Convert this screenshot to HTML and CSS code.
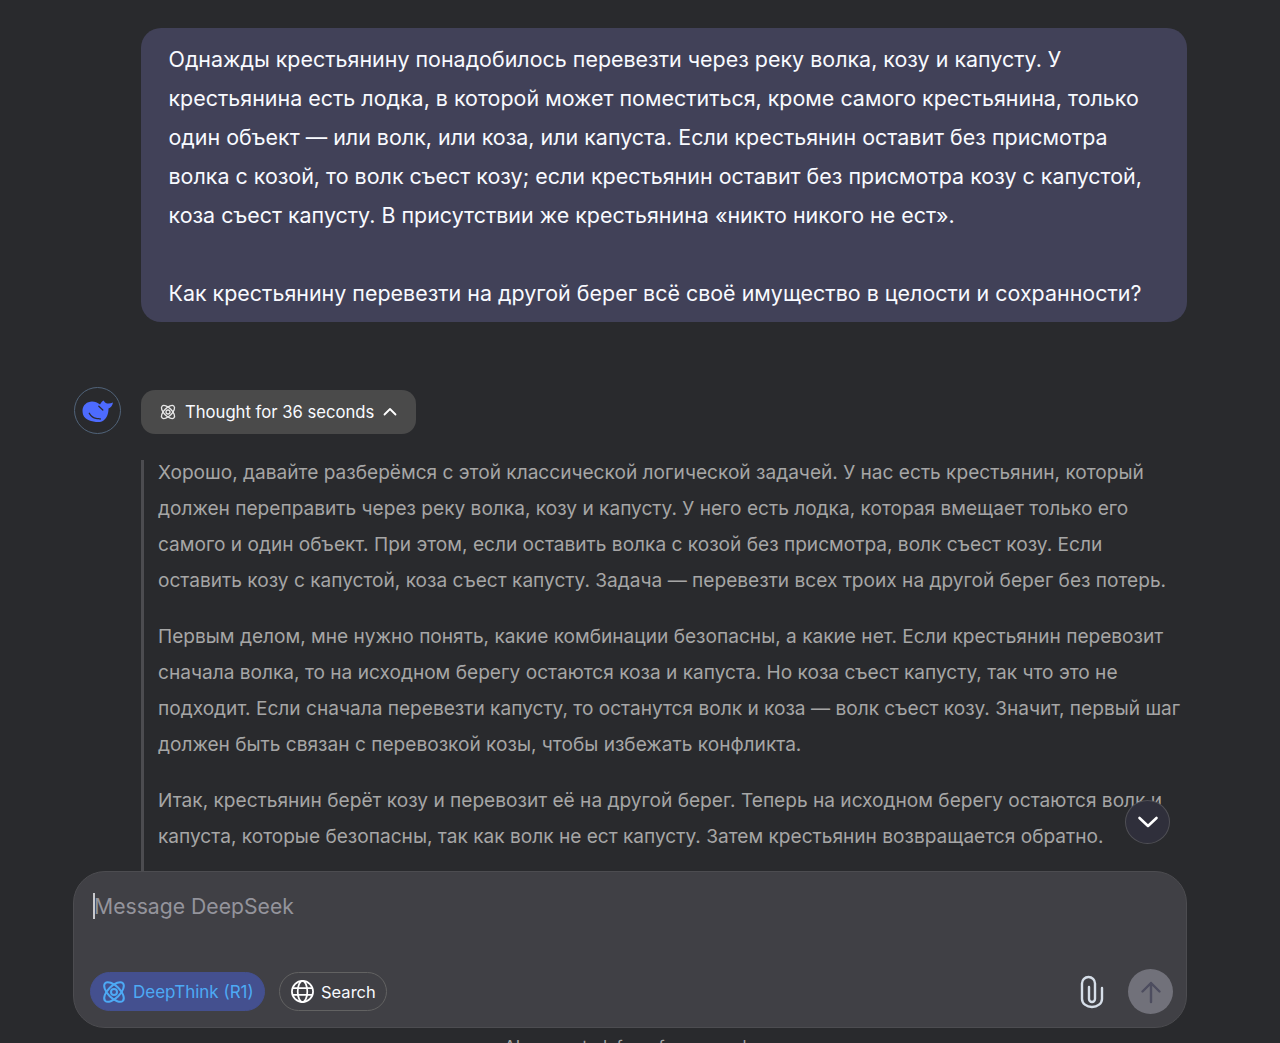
FILE: index.html
```html
<!DOCTYPE html>
<html lang="en">
<head>
    <meta charset="UTF-8">
    <meta name="viewport" content="width=device-width, initial-scale=1.0">
    <title>DeepSeek Chat</title>
    <link rel="stylesheet" href="styles.css">
</head>
<body>

    <main class="thread">
        <div class="user-msg">
            Однажды крестьянину понадобилось перевезти через реку волка, козу и капусту. У<br>
            крестьянина есть лодка, в которой может поместиться, кроме самого крестьянина, только<br>
            один объект — или волк, или коза, или капуста. Если крестьянин оставит без присмотра<br>
            волка с козой, то волк съест козу; если крестьянин оставит без присмотра козу с капустой,<br>
            коза съест капусту. В присутствии же крестьянина «никто никого не ест».<br>
            <br>
            Как крестьянину перевезти на другой берег всё своё имущество в целости и сохранности?
        </div>

        <div class="answer-head">
            <div class="avatar">
                <svg width="31" height="22" viewBox="0 0 31 22">
                    <path fill="#4d6bfe" d="M.5 10C1 5 5 1.500 10 1.500c3 0 5.500 1 8 3 .8-1.500 2-3 3.500-4 1 1.500 2 2.500 3.500 3 2 .3 4 0 6-1-.5 3-2.500 5.500-4.500 6 0 4-1 9-5 12-1.500 1-3.500 1.500-5 1.500-7 0-13.500-2-15.500-7.500C.7 13 .4 11.500 .5 10z"/>
                    <path d="M7.300 13.300C9 16 11.500 18 14 18.300c1.500.2 3 .5 4.300.7M16.800 6.200l4 3.800" fill="none" stroke="#2a2b30" stroke-width="1.300" stroke-linecap="round"/>
                </svg>
            </div>
            <button class="thought-btn">
                <svg class="atom" width="16" height="16" viewBox="0 0 24 24"><use href="#atom-icon"/></svg>
                <span>Thought for 36 seconds</span>
                <svg width="14" height="14" viewBox="0 0 14 14"><path d="M1.500 9.500 7 4l5.500 5.500" fill="none" stroke="#fff" stroke-width="1.800" stroke-linecap="round" stroke-linejoin="round"/></svg>
            </button>
        </div>

        <div class="thinking">
            <p>Хорошо, давайте разберёмся с этой классической логической задачей. У нас есть крестьянин, который<br>
            должен переправить через реку волка, козу и капусту. У него есть лодка, которая вмещает только его<br>
            самого и один объект. При этом, если оставить волка с козой без присмотра, волк съест козу. Если<br>
            оставить козу с капустой, коза съест капусту. Задача — перевезти всех троих на другой берег без потерь.</p>
            <p>Первым делом, мне нужно понять, какие комбинации безопасны, а какие нет. Если крестьянин перевозит<br>
            сначала волка, то на исходном берегу остаются коза и капуста. Но коза съест капусту, так что это не<br>
            подходит. Если сначала перевезти капусту, то останутся волк и коза — волк съест козу. Значит, первый шаг<br>
            должен быть связан с перевозкой козы, чтобы избежать конфликта.</p>
            <p>Итак, крестьянин берёт козу и перевозит её на другой берег. Теперь на исходном берегу остаются волк и<br>
            капуста, которые безопасны, так как волк не ест капусту. Затем крестьянин возвращается обратно.</p>
        </div>
    </main>

    <button class="scroll-btn">
        <svg width="24" height="24" viewBox="0 0 24 24"><path d="M3.500 8 12 16l8.500-8" fill="none" stroke="#fff" stroke-width="2.600" stroke-linecap="round" stroke-linejoin="round"/></svg>
    </button>

    <div class="composer">
        <div class="prompt"><span class="caret"></span>Message DeepSeek</div>
        <div class="tools">
            <button class="pill pill-active">
                <svg width="24" height="24" viewBox="0 0 24 24"><use href="#atom-icon"/></svg>
                <span>DeepThink (R1)</span>
            </button>
            <button class="pill pill-search">
                <svg width="25" height="25" viewBox="0 0 26 26" fill="none" stroke="#fff" stroke-width="1.800">
                    <circle cx="13" cy="13" r="11"/>
                    <ellipse cx="13" cy="13" rx="5" ry="11"/>
                    <path d="M2.500 9.500h21M2.500 16.500h21"/>
                </svg>
                <span>Search</span>
            </button>
            <div class="spacer"></div>
            <svg class="clip" width="24" height="34" viewBox="0 0 24 34"><path d="M22 13v11a10 8 0 0 1-20 0V8.500a6.500 6.500 0 0 1 13 0V24a3 3 0 0 1-6 0V12" fill="none" stroke="#d6dee8" stroke-width="2.400" stroke-linecap="round"/></svg>
            <button class="send-btn">
                <svg width="24" height="24" viewBox="0 0 24 24"><path d="M12 22V3M3.500 11.500 12 3l8.500 8.500" fill="none" stroke="#4d4d5f" stroke-width="2.400" stroke-linecap="round" stroke-linejoin="round"/></svg>
            </button>
        </div>
    </div>
    <div class="disclaimer">AI-generated, for reference only</div>

    <!-- shared atom icon -->
    <svg width="0" height="0" class="defs">
        <defs>
            <g id="atom-icon" fill="none" stroke="currentColor" stroke-width="2">
                <ellipse cx="12" cy="12" rx="12.500" ry="6" transform="rotate(45 12 12)"/>
                <ellipse cx="12" cy="12" rx="12.500" ry="6" transform="rotate(-45 12 12)"/>
                <circle cx="12" cy="12" r="3"/>
            </g>
        </defs>
    </svg>

</body>
</html>
```

FILE: styles.css
```css
* {
    box-sizing: border-box;
}

html, body {
    height: 100%;
}

body {
    position: relative;
    margin: 0;
    overflow: hidden;
    background-color: #292a2d;
    font-family: Inter, 'Liberation Sans', sans-serif;
    color: #f8faff;
}

button {
    font-family: inherit;
    border: none;
    padding: 0;
    cursor: pointer;
}

.thread {
    height: 871px;
    overflow: hidden;
    padding: 28px 93px 0 74px;
}

.user-msg {
    margin-left: 66.500px;
    padding: 12px 20px 9px 28px;
    background-color: #414158;
    border-radius: 20px;
    font-size: 21.440px;
    line-height: 39px;
    white-space: nowrap;
}

.answer-head {
    display: flex;
    align-items: flex-end;
    gap: 20px;
    margin-top: 65px;
}

.avatar {
    width: 47px;
    height: 47px;
    display: flex;
    align-items: center;
    justify-content: center;
    border: 1.500px solid #51647a;
    border-radius: 50%;
}

.thought-btn {
    display: flex;
    align-items: center;
    gap: 9px;
    width: 275px;
    height: 44px;
    padding-left: 19px;
    background-color: #4a4a4a;
    border-radius: 14px;
    color: #f8faff;
    font-size: 16.650px;
}

.atom {
    color: #e6e6e6;
}

.thinking {
    display: flow-root;
    margin: 26px 0 0 67px;
    padding-left: 14px;
    border-left: 3px solid #4c4c50;
    height: 411px;
    color: #a6a6a6;
    font-size: 19.100px;
    line-height: 36px;
    white-space: nowrap;
}

.thinking p {
    margin: 0 0 20px;
}

.thinking p:first-child {
    margin-top: -6px;
}

.scroll-btn {
    position: absolute;
    left: 1125px;
    top: 800px;
    width: 45px;
    height: 44px;
    display: flex;
    align-items: center;
    justify-content: center;
    background-color: #2f2f3b;
    border: 1.500px solid #4f4f55;
    border-radius: 50%;
}

.composer {
    display: flex;
    flex-direction: column;
    justify-content: space-between;
    height: 157px;
    margin: 0 93px 0 73px;
    padding: 21px 13px 13px 16px;
    background-color: #404045;
    border: 1px solid #4c4c50;
    border-radius: 32px;
}

.prompt {
    display: flex;
    align-items: center;
    height: 26px;
    padding-left: 3px;
    color: #94949c;
    font-size: 21.200px;
}

.caret {
    width: 2px;
    height: 26px;
    margin-right: -1px;
    background-color: #c9c9cc;
}

.tools {
    display: flex;
    align-items: center;
    gap: 14px;
}

.pill {
    display: flex;
    align-items: center;
    height: 39px;
    background: transparent;
    border: 1px solid #626262;
    border-radius: 20px;
    color: #f8faff;
}

.pill-active {
    gap: 7px;
    width: 175px;
    padding-left: 11px;
    background-color: #44508f;
    border-color: #44508f;
    color: #4daaf5;
    font-size: 17px;
}

.pill-search {
    gap: 6px;
    width: 108px;
    padding-left: 10px;
    font-size: 16.500px;
}

.spacer {
    flex: 1;
}

.clip {
    margin-right: 10px;
}

.send-btn {
    width: 45px;
    height: 45px;
    display: flex;
    align-items: center;
    justify-content: center;
    background-color: #71717a;
    border-radius: 50%;
}

.disclaimer {
    width: 1114px;
    margin: 8px 0 0 73px;
    text-align: center;
    color: #a6a6a6;
    font-size: 16.500px;
    line-height: 20px;
}

.defs {
    position: absolute;
}
```
